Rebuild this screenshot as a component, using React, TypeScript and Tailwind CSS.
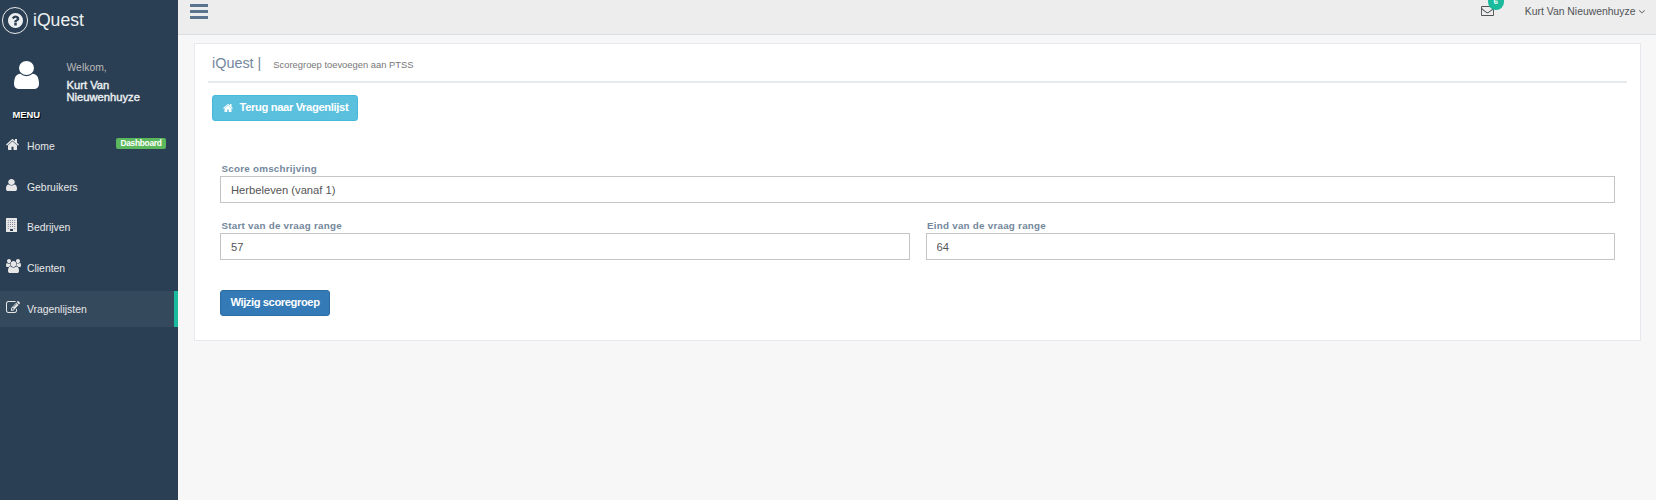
import type { ReactNode } from "react";

type IconProps = { className?: string };

const HOME =
  "M1472 992v480q0 26-19 45t-45 19h-384v-384h-256v384h-384q-26 0-45-19t-19-45v-480q0-1 .5-3t.5-3l575-474 575 474q1 2 1 6zm223-69l-62 74q-8 9-21 11h-3q-13 0-21-7l-692-577-692 577q-12 8-24 7-13-2-21-11l-62-74q-8-10-7-23.5t11-21.5l719-599q32-26 76-26t76 26l244 204v-195q0-14 9-23t23-9h192q14 0 23 9t9 23v408l219 182q10 8 11 21.5t-7 23.5z";
const USER =
  "M1536 1399q0 109-62.5 187t-150.5 78h-854q-88 0-150.5-78t-62.5-187q0-85 8.5-160.5t31.5-152 58.5-131 94-89 134.5-34.5q131 128 313 128t313-128q76 0 134.5 34.5t94 89 58.5 131 31.5 152 8.5 160.5zm-256-887q0 159-112.5 271.5t-271.5 112.5-271.5-112.5-112.5-271.5 112.5-271.5 271.5-112.5 271.5 112.5 112.5 271.5z";
const USERS =
  "M593 896q-162 5-265 128h-134q-82 0-138-40.5t-56-118.5q0-353 124-353 6 0 43.5 21t97.5 42.5 119 21.5q67 0 133-23-5 37-5 66 0 159 81 277zm1071 637q0 120-73 189.5t-194 69.5h-874q-121 0-194-69.5t-73-189.5q0-53 3.5-103.5t14-109 26.5-108.5 43-97.5 62-81 85.5-53.5 111.5-20q10 0 43 21.5t73 48 107 48 135 21.5 135-21.5 107-48 73-48 43-21.5q61 0 111.5 20t85.5 53.5 62 81 43 97.5 26.5 108.5 14 109 3.5 103.5zm-1024-1277q0 106-75 181t-181 75-181-75-75-181 75-181 181-75 181 75 75 181zm704 384q0 159-112.5 271.5t-271.5 112.5-271.5-112.5-112.5-271.5 112.5-271.5 271.5-112.5 271.5 112.5 112.5 271.5zm576 225q0 78-56 118.5t-138 40.5h-134q-103-123-265-128 81-117 81-277 0-29-5-66 66 23 133 23 59 0 119-21.5t97.5-42.5 43.5-21q124 0 124 353zm-128-609q0 106-75 181t-181 75-181-75-75-181 75-181 181-75 181 75 75 181z";
const EDIT =
  "M888 1184l116-116-152-152-116 116v56h96v96h56zm440-720q-16-16-33 1l-350 350q-17 17-1 33t33-1l350-350q17-17 1-33zm80 594v190q0 119-84.5 203.5t-203.5 84.5h-832q-119 0-203.5-84.5t-84.5-203.5v-832q0-119 84.5-203.5t203.5-84.5h832q63 0 117 25 15 7 18 23 3 17-9 29l-49 49q-14 14-32 8-23-6-45-6h-832q-66 0-113 47t-47 113v832q0 66 47 113t113 47h832q66 0 113-47t47-113v-126q0-13 9-22l64-64q15-15 35-7t20 29zm-96-738l288 288-672 672h-288v-288zm444 132l-92 92-288-288 92-92q28-28 68-28t68 28l152 152q28 28 28 68t-28 68z";
const ENVELOPE =
  "M1664 1504v-768q-32 36-69 66-268 206-426 338-51 43-83 67t-86.5 48.5-102.5 24.5h-2q-48 0-102.5-24.5t-86.5-48.5-83-67q-158-132-426-338-37-30-69-66v768q0 13 9.5 22.5t22.5 9.5h1472q13 0 22.5-9.5t9.5-22.5zm0-1051v-24.5l-.5-13-3-12.5-5.5-9-9-7.5-14-2.5h-1472q-13 0-22.5 9.5t-9.5 22.5q0 168 147 284 193 152 401 317 6 5 35 29.5t46 37.5 44.5 31.5 50.5 27.5 43 9h2q20 0 43-9t50.5-27.5 44.5-31.5 46-37.5 35-29.5q208-165 401-317 54-43 100.5-115.5t46.5-131.5zm128-37v1088q0 66-47 113t-113 47h-1472q-66 0-113-47t-47-113v-1088q0-66 47-113t113-47h1472q66 0 113 47t47 113z";
const QUESTION =
  "M1024 1376v-192q0-14-9-23t-23-9h-192q-14 0-23 9t-9 23v192q0 14 9 23t23 9h192q14 0 23-9t9-23zm256-672q0-88-55.5-163t-138.5-116-170-41q-243 0-371 213-15 24 8 42l132 100q7 6 19 6 16 0 25-12 53-68 86-92 34-24 86-24 48 0 85.5 26t37.5 59q0 38-20 61t-68 45q-63 28-115.5 86.5t-52.5 125.5v36q0 14 9 23t23 9h192q14 0 23-9t9-23q0-19 21.5-49.5t54.5-49.5q32-18 49-28.5t46-35 44.5-48 28-60.5 12.5-81zm384 192q0 209-103 385.5t-279.5 279.5-385.5 103-385.5-103-279.5-279.5-103-385.5 103-385.5 279.5-279.5 385.5-103 385.5 103 279.5 279.5 103 385.5z";
const ANGLE_DOWN =
  "M1395 736q0 13-10 23l-466 466q-10 10-23 10t-23-10l-466-466q-10-10-10-23t10-23l50-50q10-10 23-10t23 10l393 393 393-393q10-10 23-10t23 10l50 50q10 10 10 23z";

function Glyph({ d, box, className }: IconProps & { d: string; box: string }) {
  return (
    <svg viewBox={box} preserveAspectRatio="none" fill="currentColor" className={className} aria-hidden="true">
      <path d={d} />
    </svg>
  );
}

function BuildingIcon({ className }: IconProps) {
  const windows: ReactNode[] = [];
  for (let row = 0; row < 5; row++) {
    for (let col = 0; col < 4; col++) {
      if (row === 4 && (col === 1 || col === 2)) continue;
      windows.push(
        <rect key={`${row}-${col}`} x={1.8 + col * 2.15} y={2 + row * 2} width="0.9" height="0.9" fill="#6b6f90" />,
      );
    }
  }
  return (
    <svg viewBox="0 0 11 14" className={className} aria-hidden="true">
      <rect width="11" height="14" rx="0.5" fill="currentColor" />
      {windows}
      <rect x="4" y="11" width="3" height="2" fill="#2a3f54" />
    </svg>
  );
}

function BarsIcon({ className }: IconProps) {
  return (
    <svg viewBox="0 0 18 15" fill="currentColor" className={className} aria-hidden="true">
      <rect width="18" height="3" />
      <rect y="6" width="18" height="3" />
      <rect y="12" width="18" height="3" />
    </svg>
  );
}

const navItems = [
  { label: "Home", icon: <Glyph d={HOME} box="64 253 1664 1283" className="mt-px h-[11px] w-[13px]" />, badge: "Dashboard" },
  { label: "Gebruikers", icon: <Glyph d={USER} box="256 128 1280 1536" className="h-3 w-[11px]" /> },
  { label: "Bedrijven", icon: <BuildingIcon className="-mt-px h-[14px] w-[11px]" /> },
  { label: "Clienten", icon: <Glyph d={USERS} box="0 0 1920 1792" className="-mt-px h-[14px] w-[15px]" /> },
  { label: "Vragenlijsten", icon: <Glyph d={EDIT} box="0 128 1792 1408" className="h-3 w-[14px]" />, active: true },
];

function Sidebar() {
  return (
    <aside className="flex w-[178px] shrink-0 flex-col bg-[#2a3f54] text-white">
      <div className="flex h-[41px] items-center gap-[5px] pl-[2px]">
        <span className="flex h-[27px] w-[26px] items-center justify-center rounded-full border border-[#eaeaea] text-[#ecf0f1]">
          <Glyph d={QUESTION} box="128 128 1536 1536" className="size-[15px]" />
        </span>
        <span className="pb-px text-[17.6px] leading-[26px] text-[#ecf0f1]">iQuest</span>
      </div>
      <div className="flex h-[65px] pl-[14px] pt-5">
        <Glyph d={USER} box="256 128 1280 1536" className="h-7 w-[25px]" />
        <div className="ml-[27.5px] w-24">
          <div className="text-[10.4px] leading-[13px] text-[#bab8b8]">Welkom,</div>
          <div className="mt-[5px] text-[11.2px] leading-[12px] text-[#ecf0f1] [-webkit-text-stroke:0.4px_#ecf0f1]">
            Kurt Van Nieuwenhuyze
          </div>
        </div>
      </div>
      <h3 className="pl-[12.5px] pt-[2px] text-[9.4px] font-bold leading-[14px] [text-shadow:1px_1px_#000]">MENU</h3>
      <nav className="mt-[5.8px] flex flex-col gap-[4.8px]">
        {navItems.map((item) => (
          <a
            key={item.label}
            className={`flex h-9 items-start pl-[6px] pt-[10px] text-[#e7e7e7] ${
              item.active ? "border-r-4 border-[#1abb9c] bg-[#35495d]" : "pr-3"
            }`}
          >
            <span className="flex w-[21px]">{item.icon}</span>
            <span className="pt-[2px] text-[10.4px] leading-[14px]">{item.label}</span>
            {item.badge && (
              <span className="ml-auto flex h-[11px] w-[50px] items-center justify-center rounded-[2px] bg-[#5cb85c] text-[8.4px] font-bold leading-none tracking-[-0.3px] text-white">
                {item.badge}
              </span>
            )}
          </a>
        ))}
      </nav>
    </aside>
  );
}

function TopBar() {
  return (
    <header className="flex h-[35px] items-start justify-between border-b border-[#d9dee4] bg-[#ededed] pl-3 pr-[11.5px] pt-1">
      <BarsIcon className="h-[15px] w-[18px] text-[#5a738e]" />
      <div className="flex">
        <div className="relative mr-[31px] mt-[2px] h-[10px] w-[13px]">
          <Glyph d={ENVELOPE} box="0 256 1792 1408" className="h-[10px] w-[13px] text-[#515356]" />
          <span className="absolute -top-[13px] left-[7px] flex h-[17px] w-4 items-center justify-center rounded-full bg-[#1abb9c] pt-px text-[8px] font-bold leading-none text-white">
            6
          </span>
        </div>
        <span className="text-[10.4px] leading-[15px] text-[#515356]">Kurt Van Nieuwenhuyze</span>
        <Glyph d={ANGLE_DOWN} box="384 640 1024 608" className="ml-[3px] mt-[6px] h-[3.5px] w-[6px] text-[#515356]" />
      </div>
    </header>
  );
}

function Field({ label, value }: { label: string; value: string }) {
  return (
    <label className="block min-w-0 flex-1">
      <span className="block pl-[1.5px] text-[9.8px] font-bold leading-[14px] tracking-[0.25px] text-[#73879c]">{label}</span>
      <input
        defaultValue={value}
        className="block h-[27px] w-full border border-[#c4c4c4] bg-white px-[10px] text-[11.2px] text-[#555] outline-none"
      />
    </label>
  );
}

export default function App() {
  return (
    <div className="flex h-[500px] w-full overflow-hidden bg-[#f7f7f7] font-['Liberation_Sans',Arial,sans-serif]">
      <Sidebar />
      <div className="min-w-0 flex-1">
        <TopBar />
        <main className="ml-4 mr-[15px] mt-2 h-[298px] border border-[#e6e9ed] bg-white px-[13px]">
          <div className="flex h-[39px] items-start border-b-2 border-[#e6e9ed] pl-1 pt-[11px] text-[#73879c]">
            <h2 className="text-[14.4px] leading-[17px]">iQuest |</h2>
            <small className="ml-[12px] pt-[3px] text-[9.4px] leading-[14px] text-[#777]">Scoregroep toevoegen aan PTSS</small>
          </div>
          <button className="ml-1 mt-[12px] flex h-[26px] w-[146px] items-center whitespace-nowrap rounded-[3px] border border-[#46b8da] bg-[#5bc0de] pb-px pl-[10px] text-[11.2px] font-bold leading-none tracking-[-0.36px] text-white">
            <Glyph d={HOME} box="64 253 1664 1283" className="mr-[6.5px] h-2 w-[10px]" />
            Terug naar Vragenlijst
          </button>
          <form className="ml-3 mr-[12px] mt-[41px]">
            <Field label="Score omschrijving" value="Herbeleven (vanaf 1)" />
            <div className="mt-4 flex gap-4">
              <Field label="Start van de vraag range" value="57" />
              <Field label="Eind van de vraag range" value="64" />
            </div>
            <button
              type="button"
              className="mt-[30px] flex h-[26px] w-[110px] items-center justify-center whitespace-nowrap rounded-[3px] border border-[#2e6da4] bg-[#337ab7] pb-px text-[11.2px] font-bold leading-none tracking-[-0.42px] text-white"
            >
              Wijzig scoregroep
            </button>
          </form>
        </main>
      </div>
    </div>
  );
}
